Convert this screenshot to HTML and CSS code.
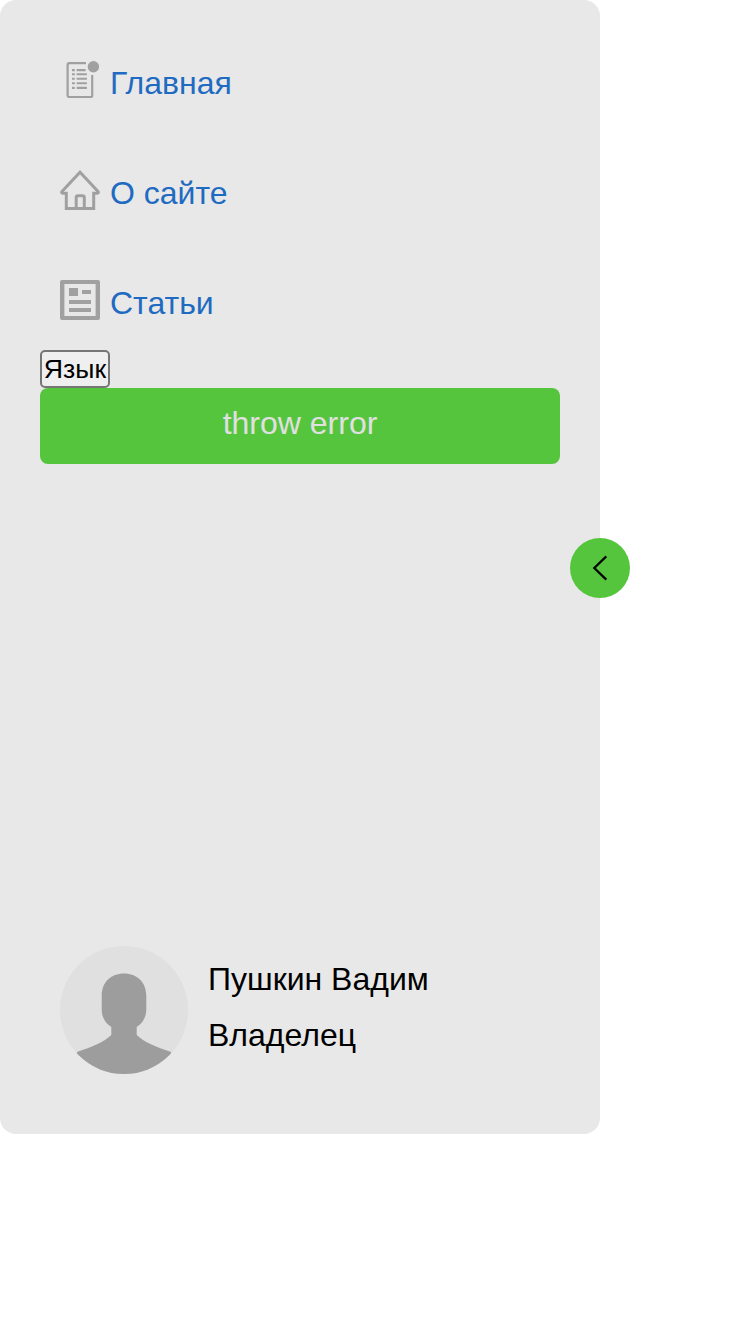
FILE: index.html
```html
<!DOCTYPE html>
<html lang="ru">
<head>
<meta charset="utf-8">
<title>Меню</title>
<link rel="stylesheet" href="styles.css">
</head>
<body>
<aside class="sidebar">
  <nav class="nav">
    <a class="nav-link" href="#">
      <svg class="icon" viewBox="0 0 40 40" fill="none" stroke="#a0a0a0">
        <path d="M26 3.2H9.3Q7.6 3.2 7.6 4.9V35.3Q7.6 37 9.3 37H31.2Q32.2 37 32.2 35.8V15" stroke-width="2.2"/>
        <path d="M12 10.1h2.8M12 14.3h2.8M12 18.8h2.8M12 23.2h2.8M12 27.9h2.8M16.6 10.1h9M16.6 14.3h10.3M16.6 18.8h10.3M16.6 23.2h10.3M16.6 27.9h10.3" stroke-width="2.1"/>
        <circle cx="33.4" cy="6.7" r="5.7" fill="#a0a0a0" stroke="none"/>
      </svg>
      <span class="label">Главная</span>
    </a>
    <a class="nav-link" href="#">
      <svg class="icon" viewBox="0 0 40 40" fill="none" stroke="#a0a0a0" stroke-width="3">
        <path d="M6.3 23.3H3Q.8 23 2.2 21.3L20 2.3L37.8 21.3Q39.2 23 37 23.3H33.7V38.5H6.3Z"/>
        <path d="M16.2 38V27.6Q16.2 25.8 18 25.8H22.5Q24.3 25.8 24.3 27.6V38"/>
      </svg>
      <span class="label">О сайте</span>
    </a>
    <a class="nav-link" href="#">
      <svg class="icon" viewBox="0 0 40 40" fill="#a0a0a0">
        <path fill-rule="evenodd" d="M2 0H38Q40 0 40 2V38Q40 40 38 40H2Q0 40 0 38V2Q0 0 2 0ZM4.4 4V36H35.6V4ZM9 8h9v8H9zM22 10h9v4h-9zM9 20h22v4H9zM9 28h22v4H9z"/>
      </svg>
      <span class="label">Статьи</span>
    </a>
  </nav>
  <button class="lang" type="button">Язык</button>
  <button class="error" type="button">throw error</button>
  <div class="user">
    <svg class="avatar" viewBox="0 0 128 128">
      <defs><clipPath id="round"><circle cx="64" cy="64" r="64"/></clipPath></defs>
      <g clip-path="url(#round)">
        <path fill="#e0e0e0" d="M0 0h128v128H0z"/>
        <path fill="#9d9d9d" d="M64 27.5C77 27.5 86.3 36 86.3 50V63C86.3 71 83 77 76.7 81V89C84 96 96 101 111 106V128H17V106C32 101 44 96 51.3 89V81C45 77 41.7 71 41.7 63V50C41.7 36 51 27.5 64 27.5Z"/>
      </g>
    </svg>
    <div class="user-info">
      <div>Пушкин Вадим</div>
      <div>Владелец</div>
    </div>
  </div>
  <button class="toggle" type="button" aria-label="Свернуть">
    <svg class="arrow" viewBox="0 0 60 60" fill="none" stroke="#000" stroke-width="2.2"><path d="M36.3 18.4L24.3 30L36.3 41.6"/></svg>
  </button>
</aside>
</body>
</html>
```
FILE: styles.css
```css
* {
  box-sizing: border-box;
}

body {
  margin: 0;
  background: #fff;
  font-family: "Liberation Sans", Arial, sans-serif;
  font-size: 32px;
}

.sidebar {
  position: relative;
  display: flex;
  flex-direction: column;
  align-items: flex-start;
  width: 600px;
  height: 1134px;
  padding: 60px 40px;
  border-radius: 16px;
  background: #e8e8e8;
}

.nav {
  display: flex;
  flex-direction: column;
  gap: 70px;
  padding: 0 20px;
  margin-bottom: 30px;
}

.nav-link {
  display: flex;
  gap: 10px;
  height: 40px;
  color: #1f6bc1;
  text-decoration: none;
}

.icon {
  width: 40px;
  height: 40px;
}

.label {
  line-height: 36px;
  padding-top: 5px;
}

.lang {
  width: 70px;
  height: 38px;
  padding: 0;
  border: 2px solid #767676;
  border-radius: 5px;
  background: #efefef;
  color: #000;
  font: 26.667px "Liberation Sans", Arial, sans-serif;
}

.error {
  width: 100%;
  height: 76px;
  padding: 0 0 6px;
  border: 0;
  border-radius: 8px;
  background: #55c53d;
  color: #e0e0e0;
  font: inherit;
}

.user {
  display: flex;
  gap: 20px;
  margin-top: auto;
  padding-left: 20px;
}

.avatar {
  width: 128px;
  height: 128px;
}

.user-info {
  padding-top: 5px;
  line-height: 56px;
}

.toggle {
  position: absolute;
  right: -30px;
  top: 538px;
  width: 60px;
  height: 60px;
  padding: 0;
  border: 0;
  border-radius: 50%;
  background: #55c53d;
}

.arrow {
  display: block;
  width: 60px;
  height: 60px;
}
```
